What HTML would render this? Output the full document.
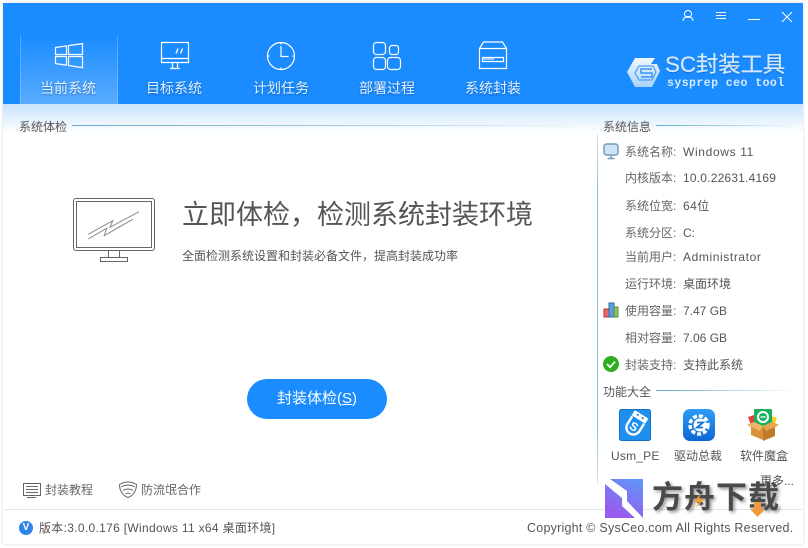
<!DOCTYPE html>
<html><head><meta charset="utf-8">
<style>
html,body{margin:0;padding:0;width:808px;height:548px;overflow:hidden;background:#fff}
body{font-family:"Liberation Sans","Noto Sans CJK SC",sans-serif;position:relative}
.t{position:absolute;white-space:nowrap;line-height:16px}
.g{color:#555;font-size:12px}
.nav{color:#e4f1ff;font-size:14px;text-align:center;width:106px;top:79px;line-height:18px;text-shadow:0 1px 2px rgba(0,50,120,.45)}
svg{position:absolute;overflow:visible}
.l{color:#666;font-size:12px;left:625px}
.v{color:#555;font-size:12px;left:683px}
</style></head><body>
<div style="position:absolute;left:3px;top:3px;width:800px;height:541px;background:#fff;box-shadow:0 0 3px rgba(0,0,0,.15)"></div>
<div style="position:absolute;left:3px;top:3px;width:800px;height:101px;background:#1a8cff"></div>
<div style="position:absolute;left:3px;top:104px;width:800px;height:30px;background:linear-gradient(#c9e3fd,#fff)"></div>
<div style="position:absolute;left:20px;top:35px;width:98px;height:69px;background:linear-gradient(rgba(255,255,255,0),rgba(255,255,255,.28));border-left:1px solid rgba(255,255,255,.22);border-right:1px solid rgba(255,255,255,.22);box-sizing:border-box"></div>

<!-- nav icons -->
<svg style="left:0;top:0" width="808" height="104" fill="none" stroke="#fff" stroke-width="1.2">
<path d="M55.500 47.500l11-1.600v8.600h-11zM68.500 45.600l14-2v10.900h-14zM55.500 56.500h11v8.700l-11-1.600zM68.500 56.500h14v11.200l-14-2.200z"/>
<path d="M161.500 42.500h27v20h-27zM161.500 58.500h27M170 68.500h10M172.500 63v5.500M177.500 63v5.500"/>
<path d="M178 48.500l-2 5M182.500 48.500l-2 5" stroke-width="1.300"/>
<circle cx="281" cy="56" r="13.500"/>
<path d="M281 46v10.500h7.500M281 42.500v2M281 67.500v2M267.500 56h2M292.500 56h2"/>
<rect x="373.500" y="42.500" width="12" height="12" rx="3"/><rect x="389.500" y="45.500" width="9" height="9" rx="2.500"/>
<rect x="373.500" y="57.500" width="12" height="12" rx="3"/><rect x="387.500" y="57.500" width="13" height="12" rx="3"/>
<path d="M479.500 48.500l4-6.500h19l4 6.500M479.500 48.500h27v20h-27zM482.500 57.500h21v4h-21z"/>
<path d="M483 59h11" stroke-width="1"/>
</svg>
<div class="t nav" style="left:15px">当前系统</div>
<div class="t nav" style="left:121px">目标系统</div>
<div class="t nav" style="left:228px">计划任务</div>
<div class="t nav" style="left:334px">部署过程</div>
<div class="t nav" style="left:440px">系统封装</div>

<!-- window buttons -->
<svg style="left:0;top:0" width="808" height="40" fill="none" stroke="#fff" stroke-width="1">
<circle cx="688" cy="14" r="3.500"/><path d="M683 21c.5-3.500 2.500-4.500 5-4.500s4.500 1 5 4.500"/>
<path d="M716 12.500h10M716 15.500h10M716 18.500h10"/>
<path d="M748 19.500h12"/>
<path d="M782 12l10 10M792 12l-10 10"/>
</svg>

<!-- logo -->
<svg style="left:627px;top:58px" width="34" height="31">
<defs><linearGradient id="lg" x1="0" y1="0" x2="0" y2="1"><stop offset="0" stop-color="#f1f8ff"/><stop offset="1" stop-color="#a9d3fb"/></linearGradient></defs>
<path d="M8 0H28L24 6H30L33 13L25 29H8L0 14Z" fill="url(#lg)"/>
<path d="M12 8H26L29 14L25 22H12L8 15Z" stroke="#4a9df0" stroke-width="1.200" fill="none"/>
<path d="M25 11H14V15H25V19H14" stroke="#3b95ee" stroke-width="1.500" fill="none"/>
</svg>
<div class="t" style="left:665px;top:52px;font-size:22.300px;line-height:26px;color:#cfe6fd;-webkit-text-stroke:.3px #cfe6fd;text-shadow:0 1px 1px rgba(0,50,120,.4)">SC封装工具</div>
<div class="t" style="left:667px;top:77px;font-family:'Liberation Mono',monospace;font-size:11.500px;font-weight:bold;line-height:14px;color:#d6eafd;letter-spacing:.45px">sysprep ceo tool</div>

<!-- left section -->
<div class="t g" style="left:19px;top:119px">系统体检</div>
<div style="position:absolute;left:72px;top:125px;width:520px;height:1px;background:linear-gradient(90deg,#6fa8cb,#a9cde0 55%,rgba(255,255,255,.2))"></div>
<svg style="left:60px;top:185px" width="110" height="85" fill="none" stroke="#666" stroke-width="1">
<rect x="13.500" y="13.500" width="81" height="52" rx="2.500"/>
<rect x="16.500" y="16.500" width="75" height="46"/>
<path d="M48.500 65.500v6.500M59.500 65.500v6.500M40.500 72.500h27v4h-27z"/>
<path d="M28.300 49.300L52.700 35.700L50 42.300L79 26.700M28.300 54L46.700 43.300L44.300 50.700L72.700 34.300" stroke="#888"/>
</svg>
<div class="t" style="left:182px;top:199px;font-size:27px;line-height:32px;color:#555">立即体检，检测系统封装环境</div>
<div class="t" style="left:182px;top:248px;font-size:12px;color:#555">全面检测系统设置和封装必备文件，提高封装成功率</div>
<div style="position:absolute;left:247px;top:379px;width:140px;height:40px;border-radius:20px;background:#1a8cff;color:#fff;font-size:15px;line-height:40px;text-align:center">封装体检(<u>S</u>)</div>

<!-- bottom links -->
<svg style="left:0;top:470px" width="240" height="40" fill="none" stroke="#666" stroke-width="1">
<rect x="23.500" y="13.500" width="17" height="12"/><path d="M26 16.500h12M26 19.500h12M26 22.500h12M27 27.500h9"/>
<path d="M128 12c3 0 6 1 8.500 2.500 0 6-3 11-8.500 13-5.500-2-8.500-7-8.500-13C122 13 125 12 128 12z"/>
<path d="M121 17c4-2.500 10-2.500 14 0M123 20.500c3-2 7-2 10 0M125.500 24c1.500-1 3.500-1 5 0"/>
</svg>
<div class="t g" style="left:45px;top:482px;color:#666">封装教程</div>
<div class="t g" style="left:141px;top:482px;color:#666">防流氓合作</div>

<!-- footer -->
<div style="position:absolute;left:4px;top:509px;width:798px;height:1px;background:#e4e4e4"></div>
<div style="position:absolute;left:19px;top:521px;width:14px;height:14px;border-radius:50%;background:#2f86e6;color:#fff;font-size:10px;line-height:14px;text-align:center;font-weight:bold">V</div>
<div class="t g" style="left:39px;top:520px;letter-spacing:.31px">版本:3.0.0.176 [Windows 11 x64 桌面环境]</div>
<div class="t" style="left:527px;top:520px;color:#555;font-size:12.500px;letter-spacing:.23px">Copyright © SysCeo.com All Rights Reserved.</div>

<!-- right section -->
<div style="position:absolute;left:597px;top:134px;width:1px;height:350px;background:linear-gradient(#d5e6f0,#8fbfdb 15%,#8fbfdb 85%,#d5e6f0)"></div>
<div class="t g" style="left:603px;top:119px">系统信息</div>
<div style="position:absolute;left:656px;top:125px;width:140px;height:1px;background:linear-gradient(90deg,#62aecb,rgba(255,255,255,.1))"></div>
<svg style="left:603px;top:143px" width="16" height="18">
<rect x="1" y="1" width="14" height="11" rx="2.500" fill="#cfe3f0" stroke="#6d9dbd" stroke-width="1.500"/>
<path d="M8 12v3M4.500 15.500h7" stroke="#6d9dbd" stroke-width="1.500"/>
</svg>
<div class="t l" style="top:144px">系统名称:</div><div class="t v" style="top:144px;letter-spacing:.65px">Windows 11</div>
<div class="t l" style="top:170px">内核版本:</div><div class="t v" style="top:170px;letter-spacing:.2px">10.0.22631.4169</div>
<div class="t l" style="top:198px">系统位宽:</div><div class="t v" style="top:198px;letter-spacing:.45px">64位</div>
<div class="t l" style="top:225px">系统分区:</div><div class="t v" style="top:225px">C:</div>
<div class="t l" style="top:249px">当前用户:</div><div class="t v" style="top:249px;letter-spacing:.6px">Administrator</div>
<div class="t l" style="top:276px">运行环境:</div><div class="t v" style="top:276px">桌面环境</div>
<svg style="left:603px;top:302px" width="16" height="16">
<rect x="1" y="7" width="5" height="8" fill="#e8686c" stroke="#b33"/>
<rect x="6" y="1" width="5" height="14" fill="#5b9fe0" stroke="#2b6cb0"/>
<rect x="11" y="5" width="4" height="10" fill="#8cc26a" stroke="#5a8e3c"/>
</svg>
<div class="t l" style="top:303px">使用容量:</div><div class="t v" style="top:303px">7.47 GB</div>
<div class="t l" style="top:330px">相对容量:</div><div class="t v" style="top:330px">7.06 GB</div>
<svg style="left:603px;top:356px" width="16" height="16">
<circle cx="8" cy="8" r="8" fill="#2eae1e"/><path d="M4 8l3 3.200 5-5.500" stroke="#fff" stroke-width="1.800" fill="none"/>
</svg>
<div class="t l" style="top:357px">封装支持:</div><div class="t v" style="top:357px">支持此系统</div>

<div class="t g" style="left:603px;top:384px">功能大全</div>
<div style="position:absolute;left:656px;top:390px;width:140px;height:1px;background:linear-gradient(90deg,#62a5cb,rgba(255,255,255,.1))"></div>

<svg style="left:619px;top:409px" width="32" height="32">
<rect x=".5" y=".5" width="31" height="31" rx="2" fill="#1d8fee" stroke="#1574c8"/>
<g transform="rotate(32 16 16)">
<path d="M9 10v9a7 7 0 0 0 14 0v-9" fill="none" stroke="#fff" stroke-width="2.400"/>
<path d="M8 9.500h16v-6h-16z" fill="#fff"/>
<path d="M12 5h2v2h-2zM18 5h2v2h-2z" fill="#1d8fee"/>
<text x="12" y="22" font-size="12" font-weight="bold" fill="#fff" font-family="Liberation Sans">S</text>
</g>
</svg>
<svg style="left:683px;top:409px" width="32" height="32">
<defs><linearGradient id="bl" x1="0" y1="0" x2="0" y2="1"><stop offset="0" stop-color="#2f9cf6"/><stop offset="1" stop-color="#0a66d6"/></linearGradient></defs>
<rect width="32" height="32" rx="7" fill="url(#bl)"/>
<circle cx="16" cy="16" r="9" fill="none" stroke="#fff" stroke-width="3.500" stroke-dasharray="4 2"/>
<circle cx="17" cy="16" r="6.500" fill="#fff"/>
<path d="M14 13.500h6l-6 5h6" stroke="#1673d8" stroke-width="1.800" fill="none"/>
</svg>
<svg style="left:746px;top:409px" width="33" height="33">
<path d="M2 8l6-2 3 10H5z" fill="#e2403f"/><path d="M25 7l6 2-3 8h-5z" fill="#f2d024"/>
<rect x="8" y="0" width="18" height="17" rx="1.500" fill="#17b160"/>
<circle cx="17" cy="8" r="5" fill="none" stroke="#fff" stroke-width="2"/>
<path d="M14.500 8h5" stroke="#fff" stroke-width="1.300"/>
<path d="M1 16l7-3 9 4 9-4 7 3-4 2v8l-12 5-12-5v-8z" fill="#d8913a"/>
<path d="M17 20v12l12-5v-9z" fill="#bf7a2a"/>
<path d="M1 16l7-3 9 4-3 5z" fill="#eeb668"/><path d="M33 16l-7-3-9 4 3 5z" fill="#e8a653"/>
</svg>
<div class="t g" style="left:611px;top:448px;letter-spacing:.2px">Usm_PE</div>
<div class="t g" style="left:674px;top:448px">驱动总裁</div>
<div class="t g" style="left:740px;top:448px">软件魔盒</div>
<div class="t g" style="left:760px;top:473px">更多...</div>

<!-- watermark -->
<svg style="left:605px;top:479px" width="38" height="39">
<defs><linearGradient id="wm" x1="1" y1="0" x2="0.500" y2="1"><stop offset="0" stop-color="#5a9af8"/><stop offset="1" stop-color="#9a5bf0"/></linearGradient></defs>
<rect width="38" height="39" fill="url(#wm)"/>
<path d="M0 0H5L22 12V22L38 39H30L17 27V19L0 5Z" fill="#fff"/>
</svg>
<div class="t" style="left:652px;top:478px;font-size:31px;line-height:40px;font-weight:bold;color:#4a4a4a;letter-spacing:1px;text-shadow:2px 2px 3px rgba(0,0,0,.4)">方舟下载</div>
<svg style="left:680px;top:484px" width="90" height="34">
<path d="M21 9l-7 9h5l-3 6 8-9h-5l2-6z" fill="#f5a02c"/>
<path d="M74 18h7v7h4l-7.500 8-7.500-8h4z" fill="#f09a3a"/>
</svg>
</body></html>
